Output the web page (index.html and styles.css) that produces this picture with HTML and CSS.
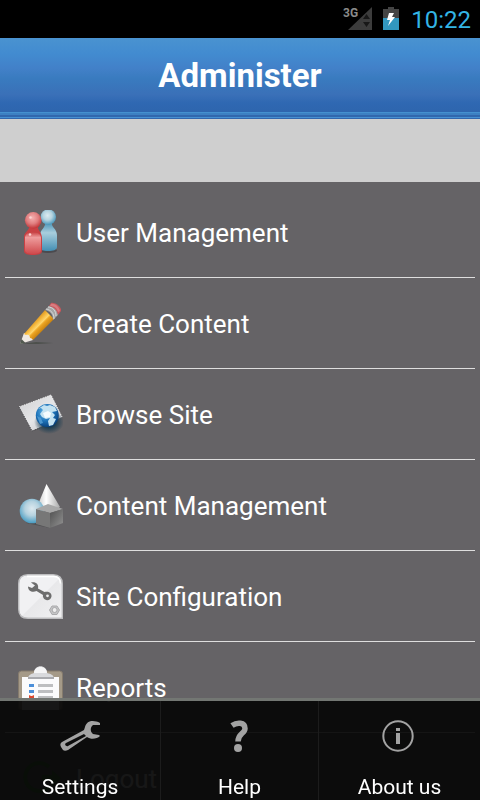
FILE: index.html
```html
<!DOCTYPE html>
<html lang="en">
<head>
<meta charset="utf-8">
<meta name="viewport" content="width=device-width, initial-scale=1">
<title>Administer</title>
<link rel="stylesheet" href="styles.css">
</head>
<body>
<div class="screen">
  <div class="status">
    <svg class="signal" width="30" height="28" viewBox="0 0 30 28" aria-hidden="true">
      <path d="M29 2V25H5z" fill="#3c3c3c"/>
      <path d="M20 14l3.500-5 3.500 5zM20 17h7l-3.500 5z" fill="#181818"/>
      <text x="0" y="12" class="network">3G</text>
    </svg>
    <svg class="battery" width="16" height="24" viewBox="0 0 16 24" aria-hidden="true">
      <path d="M5 0h6v2h5v9H0V2h5z" fill="#444"/>
      <path d="M0 11h16v12H0z" fill="#3297bf"/>
      <path d="M6 6h5l-2 4h3l-7 9 2-6H4z" fill="#fff"/>
    </svg>
    <time class="clock">10:22</time>
  </div>
  <header class="header"><h1 class="title">Administer</h1></header>
  <div class="spacer"></div>
  <main class="list">
    <a class="row" href="#users">
      <svg class="icon" viewBox="0 0 45 45" aria-hidden="true">
        <defs>
          <radialGradient id="bh" cx=".45" cy=".4" r=".6"><stop offset="0" stop-color="#dcebf0"/><stop offset=".5" stop-color="#b5d3df"/><stop offset="1" stop-color="#4b98bb"/></radialGradient>
          <linearGradient id="bb" x1="0" y1="0" x2="0" y2="1"><stop offset="0" stop-color="#4d96b8"/><stop offset=".35" stop-color="#a9cedd"/><stop offset="1" stop-color="#438fb4"/></linearGradient>
          <radialGradient id="rh" cx=".45" cy=".35" r=".65"><stop offset="0" stop-color="#f5b0b0"/><stop offset=".55" stop-color="#e17f80"/><stop offset="1" stop-color="#c23538"/></radialGradient>
          <linearGradient id="rb" x1="0" y1="0" x2="0" y2="1"><stop offset="0" stop-color="#c63e40"/><stop offset=".25" stop-color="#ee9c9c"/><stop offset="1" stop-color="#cf494c"/></linearGradient>
        </defs>
        <ellipse cx="30" cy="40.500" rx="9" ry="2.500" fill="#4b4a4e"/>
        <path d="M27 13h7c-1 4 5 6 5 12v12c0 3-4 4-9 4s-8-1-8-4V25c0-5 6-8 5-12z" fill="url(#bb)"/>
        <circle cx="30.300" cy="7" r="7.700" fill="url(#bh)"/>
        <path d="M11 16h9c-1 4 4 6 4 12v13c0 3-4 4-9 4s-9-1-9-4V27c0-5 6-7 5-11z" fill="#c94144"/>
        <path d="M7 27c1-4 4-5 8-5s8 2 8 6v12c0 3-4 4-8 4s-8-1-8-4z" fill="url(#rb)"/>
        <circle cx="15.200" cy="10.300" r="8.300" fill="url(#rh)"/>
        <circle cx="12.500" cy="7.500" r="1.300" fill="#fbd4d3"/><circle cx="12" cy="24.500" r="1.300" fill="#fbd4d3"/>
      </svg>
      <span class="label">User Management</span>
    </a>
    <a class="row" href="#create">
      <svg class="icon" viewBox="0 0 45 45" aria-hidden="true">
        <defs><linearGradient id="pc" x1=".3" y1=".3" x2=".7" y2=".7"><stop offset="0" stop-color="#c98515"/><stop offset=".3" stop-color="#f4b53a"/><stop offset=".5" stop-color="#ffd66b"/><stop offset=".6" stop-color="#eda522"/><stop offset="1" stop-color="#b97408"/></linearGradient></defs>
        <path d="M4 43l14-2 17 1-15 1z" fill="#4d504c"/>
        <path d="M2 43l4-11 7 1 2 6z" fill="#eee8e2"/>
        <path d="M2 43l1.500-5 4 4z" fill="#535a50"/>
        <path d="M6 33L27 9l9 9-21 21c-1-1-1-2-3-2 0-3-2-4-4-3z" fill="url(#pc)"/>
        <path d="M27 9l4-4c5 0 9 4 9 9l-5 5c0-6-3-9-8-10z" fill="#a5a6a6"/>
        <path d="M28 8c5 1 8 4 8 10M30 6c5 0 8 4 8 9" fill="none" stroke="#d6d7d7"/>
        <path d="M31 5l2-3c4-1 11 4 10 8l-3 4c-1-5-4-8-9-9z" fill="#c9575c"/>
        <path d="M33 3c4-1 8 3 9 7l-2 1c-1-4-4-6-8-6z" fill="#d97b7f"/>
      </svg>
      <span class="label">Create Content</span>
    </a>
    <a class="row" href="#browse">
      <svg class="icon" viewBox="0 0 45 45" aria-hidden="true">
        <defs>
          <linearGradient id="pp" x1="0" y1="0" x2="1" y2="1"><stop offset="0" stop-color="#cfcfd1"/><stop offset=".5" stop-color="#e6e6e8"/><stop offset="1" stop-color="#bcbcc0"/></linearGradient>
          <radialGradient id="gl" cx=".4" cy=".35" r=".7"><stop offset="0" stop-color="#68bdf0"/><stop offset=".55" stop-color="#1d72b8"/><stop offset="1" stop-color="#063b76"/></radialGradient>
          <radialGradient id="gs"><stop offset=".4" stop-color="#163a50"/><stop offset="1" stop-color="#163a50" stop-opacity="0"/></radialGradient>
        </defs>
        <path d="M1 15L33 3l11 22-30 14z" fill="url(#pp)"/>
        <path d="M1 15L33 3l11 22" fill="none" stroke="#eee" stroke-dasharray="1.500 1"/>
        <path d="M1 15l13 24 8-3" fill="none" stroke="#48484b" stroke-dasharray="1.500 1"/>
        <ellipse cx="31" cy="30" rx="15" ry="12" fill="url(#gs)"/>
        <circle cx="29.300" cy="23.500" r="11.500" fill="url(#gl)"/>
        <path d="M20 17l6-4 3 1 3-1 5 2 2 4-5 1 3 3-2 3 3 1-3 6-4 1-1-5 2-3-4 1-4-2-2-3 3-4-2-2z" fill="#c4e2f1"/>
        <path d="M25 21l5-2 3 2-1 4-5 1z" fill="#f4fbfe"/>
        <path d="M19 24l4 2 2 5-3 1z" fill="#4c97cf"/>
      </svg>
      <span class="label">Browse Site</span>
    </a>
    <a class="row" href="#content">
      <svg class="icon" viewBox="0 0 45 45" aria-hidden="true">
        <defs>
          <radialGradient id="sp" cx=".5" cy=".4" r=".58"><stop offset="0" stop-color="#dce9ef"/><stop offset=".5" stop-color="#b5d2df"/><stop offset="1" stop-color="#4e9fc4"/></radialGradient>
          <linearGradient id="cn"><stop offset="0" stop-color="#c4c4c4"/><stop offset=".4" stop-color="#fff"/><stop offset="1" stop-color="#a9a9a9"/></linearGradient>
          <linearGradient id="cu" x1="0" y1="0" x2="1" y2="1"><stop offset="0" stop-color="#505050"/><stop offset="1" stop-color="#929292"/></linearGradient>
        </defs>
        <path d="M8 40l24 5 13-7-30-2z" fill="#505052"/>
        <path d="M28.500 1L19 24c4 4 19 4 23 0z" fill="url(#cn)"/>
        <circle cx="14" cy="28" r="12.300" fill="url(#sp)"/>
        <path d="M18 26l12-5 15 5-13 4z" fill="#a8a8a8"/>
        <path d="M18 26l14 4v15l-14-4z" fill="#777"/>
        <path d="M32 30l13-4v14l-13 5z" fill="url(#cu)"/>
      </svg>
      <span class="label">Content Management</span>
    </a>
    <a class="row" href="#configuration">
      <svg class="icon" viewBox="0 0 45 45" aria-hidden="true">
        <defs><linearGradient id="tl" x1="0" y1="0" x2="1" y2="1"><stop offset=".5" stop-color="#f1f1f3"/><stop offset=".52" stop-color="#e8e8ea"/><stop offset="1" stop-color="#f1f1f2"/></linearGradient></defs>
        <path d="M10 .7h25q9.300 0 9.300 9.300v34.300H10Q.7 44.300.7 35V10Q.7.700 10 .7z" fill="url(#tl)" stroke="#bdbdbf" stroke-width="1.400"/>
        <path d="M9 2.500h27q6 0 6.500 7" fill="none" stroke="#fff" stroke-width="1.500"/>
        <path d="M13 8.500c5-1 8 2 7 6l6.500 3.500c4-1 7.500 1 7 4.500-.5 4-6 5-8 1.500-.6-1-.8-2-.5-3L18.500 17c-4 2-8.500 0-8.500-4.500l4 1.500 3-2.500z" fill="#6d6d6d"/>
        <circle cx="29.500" cy="21.800" r="1.400" fill="#ececee"/>
        <path d="M34 32h5l2.500 4-2.500 4.500h-5L31.500 36z" fill="#c5c5c6" stroke="#aaaaac"/>
        <circle cx="36.600" cy="36" r="2.500" fill="#eee" stroke="#a7a7a9"/>
      </svg>
      <span class="label">Site Configuration</span>
    </a>
    <a class="row" href="#reports">
      <svg class="icon" viewBox="0 0 45 45" aria-hidden="true">
        <rect x=".5" y="6" width="44" height="39" rx="3" fill="#a59a88" stroke="#857b6d"/>
        <path d="M4 12h37v33H4z" fill="#fbfbfc"/>
        <path d="M10 14c0-4 3-5 6-6 0-9 13-9 13 0 4 1 7 2 7 6z" fill="#d9dadd"/>
        <path d="M16 8c0-8 13-8 13 0z" fill="#f5f5f6"/>
        <path d="M10 12h26v2H10z" fill="#a9aaae"/>
        <path d="M11 19h5v3h-5zM11 25h5v3h-5z" fill="#4c8fd9"/>
        <path d="M20 19h15v3H20zM20 25h15v3H20zM20 31h15v3H20z" fill="#bdbec0"/>
        <path d="M11 30l2 1h1l2-1v5h-5z" fill="#dc4930"/>
      </svg>
      <span class="label">Reports</span>
    </a>
    <a class="row" href="#logout">
      <svg class="icon" viewBox="0 0 45 45" aria-hidden="true">
        <path d="M31 11a14 14 0 1 0 1 19" fill="none" stroke="#397c35" stroke-width="4"/>
        <path d="M24 19h10v-5l9 8-9 9v-6H24z" fill="#397c35"/>
      </svg>
      <span class="label">Logout</span>
    </a>
  </main>
  <nav class="menu" aria-label="Options">
    <button class="item" type="button">
      <svg class="glyph" viewBox="0 0 42 34" aria-hidden="true">
        <path fill-rule="evenodd" d="M41 4C35 1 28 1 26 8l-1 3L3 23c-2 1-2 3-1 5l2 3c1 1 3 1 5 0l19-13c4 3 10 2 13-1l-1-1-6-1c-3-2-3-7 0-9h7zM25 15l2 2L9 27c-2 1-4-2-2-3z" fill="#a3a3a3"/>
      </svg>
      <span>Settings</span>
    </button>
    <button class="item" type="button">
      <svg class="glyph" viewBox="0 0 42 34" aria-hidden="true">
        <path d="M13 6.500C18 3 26 3 26 9.500c0 5-7 5-7 13" fill="none" stroke="#a3a3a3" stroke-width="5.500"/>
        <circle cx="19" cy="29" r="4" fill="#a3a3a3"/>
      </svg>
      <span>Help</span>
    </button>
    <button class="item" type="button">
      <svg class="glyph" viewBox="0 0 42 34" aria-hidden="true">
        <circle cx="19" cy="17" r="14.700" fill="none" stroke="#a3a3a3" stroke-width="2"/>
        <path d="M17 9h4v3h-4zM17 14h4v11h-4z" fill="#a3a3a3"/>
      </svg>
      <span>About us</span>
    </button>
  </nav>
</div>
</body>
</html>
```
FILE: styles.css
```css
* {
  box-sizing: border-box;
}

body {
  margin: 0;
  background: #656366;
  color: #fff;
  font-family: Roboto, "Liberation Sans", sans-serif;
}

.screen {
  height: 100vh;
  overflow: hidden;
}

.status {
  display: flex;
  align-items: center;
  justify-content: flex-end;
  height: 38px;
  padding-right: 9px;
  background: #000;
}

.network {
  fill: #8a8a8a;
  font-size: 12px;
  font-weight: 700;
}

.battery {
  margin: 0 12px 0 10px;
}

.clock {
  padding-top: 2px;
  color: #33b5e5;
  font-size: 24px;
  line-height: 36px;
}

.header {
  display: flex;
  flex-direction: column;
  background: linear-gradient(#4a93d0, #428bd0 20%, #4280c8 38%, #397bbf 50%, #3a70b8 70%, #2f68b2 80%, #2d63ab);
}

.header::after {
  height: 7px;
  background: linear-gradient(#4490cf 0 1px, #3c80c3 1px 3px, #3167ad 3px 5px, #4690d2 5px 6px, #3268ae 6px);
  content: "";
}

.title {
  margin: 0;
  padding-top: 2px;
  font-size: 33px;
  line-height: 72px;
  text-align: center;
}

.spacer {
  height: 63px;
  background: #cfcfcf;
}

.list {
  padding: 5px;
}

.row {
  display: flex;
  align-items: center;
  gap: 13px;
  height: 91px;
  padding-left: 13px;
  border-bottom: 1px solid #dedede;
  color: #fff;
  text-decoration: none;
}

.icon {
  flex: none;
  width: 45px;
  height: 45px;
}

.label {
  padding-top: 2px;
  font-size: 26px;
  line-height: 32px;
}

.menu {
  position: fixed;
  right: 0;
  bottom: 0;
  left: 0;
  display: grid;
  grid-template-columns: 161fr 158fr 161fr;
  border-top: 3px solid #737773;
  background: rgba(5, 5, 5, 0.93);
}

.item {
  display: flex;
  flex-direction: column;
  align-items: center;
  gap: 21px;
  padding: 18px 0 0;
  border: 0;
  border-right: 1px solid #1c1c1c;
  background: none;
  color: #fff;
  font: inherit;
  font-size: 21px;
  line-height: 26px;
}

.item:last-child {
  border-right: 0;
}

.glyph {
  width: 42px;
  height: 34px;
}
```
